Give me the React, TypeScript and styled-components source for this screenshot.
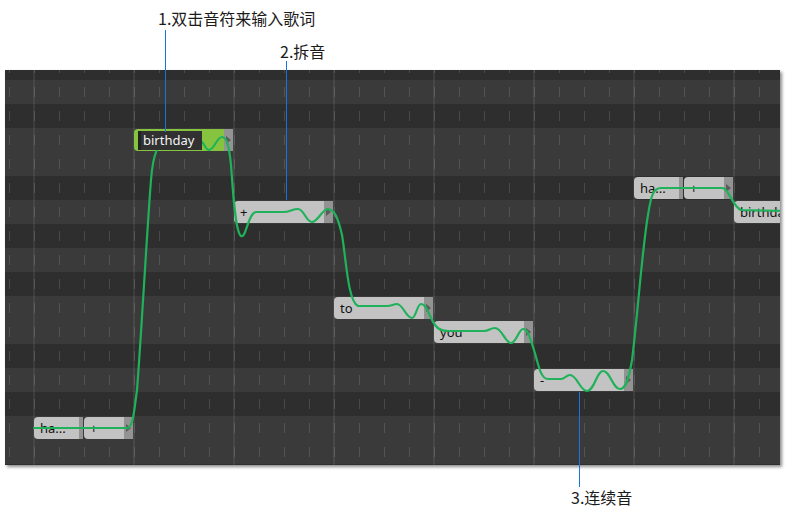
import React from 'react';
import styled, { createGlobalStyle } from 'styled-components';

const GlobalStyle = createGlobalStyle`
  html, body { margin: 0; padding: 0; background: #ffffff; }
  body { font-family: "Noto Sans CJK SC", "Noto Sans", sans-serif; }
  #root { width: 789px; height: 516px; }
`;

const Figure = styled.div`
  position: relative;
  box-sizing: border-box;
  width: 789px;
  height: 516px;
  padding: 70px 0 0 5px;
  overflow: hidden;
  background: #ffffff;
`;

const Editor = styled.div`
  position: relative;
  width: 775px;
  height: 395px;
  overflow: hidden;
  background: #2e2e2e;
  box-shadow: 2px 2px 3px rgba(0, 0, 0, 0.45);
`;

const Rows = styled.div`
  display: flex;
  flex-direction: column;
  margin-top: -14px;
`;

const KeyRow = styled.div<{ $black: boolean }>`
  flex: none;
  height: 24px;
  background-color: ${(p) => (p.$black ? '#2e2e2e' : '#3a3a3a')};
  background-image:
    repeating-linear-gradient(to right, transparent 0 28px, rgba(255, 255, 255, 0.07) 28px 30px, transparent 30px 100px),
    repeating-linear-gradient(to right, transparent 0 4px, rgba(255, 255, 255, 0.13) 4px 5px, transparent 5px 25px);
  background-size: 100% 100%, 100% 10px;
  background-position: 0 0, 0 7px;
  background-repeat: no-repeat;
`;

const NotesLayer = styled.div`
  position: absolute;
  inset: 0;
`;

const NoteBox = styled.div`
  position: absolute;
  display: flex;
  height: 22px;
`;

const NoteBody = styled.div<{ $selected?: boolean }>`
  flex: 1;
  display: flex;
  align-items: center;
  min-width: 0;
  padding-left: ${(p) => (p.$selected ? '4px' : '6px')};
  border-radius: 4px 0 0 4px;
  background: ${(p) => (p.$selected ? '#86c43f' : '#c3c3c3')};
  color: #111111;
  font-family: "Noto Sans", "Open Sans", sans-serif;
  font-size: 13px;
  line-height: 22px;
  white-space: nowrap;
`;

const NoteTail = styled.div<{ $linked?: boolean }>`
  flex: none;
  width: ${(p) => (p.$linked ? '4px' : '9px')};
  display: flex;
  align-items: center;
  padding-left: 2px;
  box-sizing: border-box;
  background: #939393;
`;

const TailArrow = styled.span`
  width: 0;
  height: 0;
  border-left: 5px solid #5c5c5c;
  border-top: 4px solid transparent;
  border-bottom: 4px solid transparent;
`;

const LyricInput = styled.div`
  position: relative;
  z-index: 3;
  height: 19px;
  width: 64px;
  box-sizing: border-box;
  padding-left: 2px;
  background: #313131;
  border-left: 3px solid #222222;
  color: #f4f4f4;
  font-size: 13px;
  line-height: 19px;
`;

const Curve = styled.svg`
  position: absolute;
  left: 0;
  top: 0;
  z-index: 2;
  pointer-events: none;
`;

const Callout = styled.div<{ $lineFirst?: boolean }>`
  position: absolute;
  z-index: 4;
  display: flex;
  flex-direction: ${(p) => (p.$lineFirst ? 'column-reverse' : 'column')};
  align-items: flex-start;
`;

const CalloutText = styled.div`
  color: #1b1b1b;
  font-family: "Noto Sans CJK SC", "Noto Sans", sans-serif;
  font-size: 16px;
  line-height: 16px;
  white-space: nowrap;
`;

const Leader = styled.div<{ $offset: number; $length: number; $gap: number; $lineFirst?: boolean }>`
  width: 1px;
  height: ${(p) => p.$length}px;
  margin-left: ${(p) => p.$offset}px;
  ${(p) => (p.$lineFirst ? `margin-bottom: ${p.$gap}px;` : `margin-top: ${p.$gap}px;`)}
  background: #1775dc;
`;

type NoteData = {
  lyric: string;
  start: number;
  len: number;
  key: number;
  linked?: boolean;
  selected?: boolean;
};

const notes: NoteData[] = [
  { lyric: 'ha...', start: 0, len: 2, key: 14, linked: true },
  { lyric: '+', start: 2, len: 2, key: 14 },
  { lyric: 'birthday', start: 4, len: 4, key: 2, selected: true },
  { lyric: '+', start: 8, len: 4, key: 5 },
  { lyric: 'to', start: 12, len: 4, key: 9 },
  { lyric: 'you', start: 16, len: 4, key: 10 },
  { lyric: '-', start: 20, len: 4, key: 12 },
  { lyric: 'ha...', start: 24, len: 2, key: 4, linked: true },
  { lyric: '+', start: 26, len: 2, key: 4 },
  { lyric: 'birthday', start: 28, len: 4, key: 5 },
];

// Keys from top (first row is partially hidden)
const keyNames = ['Eb', 'D', 'Db', 'C', 'B', 'Bb', 'A', 'Ab', 'G', 'Gb', 'F', 'E', 'Eb', 'D', 'Db', 'C', 'B', 'Bb'];
const isBlack = (n: string) => n.length > 1;

const STEP = 25;
const ORIGIN_X = 29;
const ROW_H = 24;
const ORIGIN_Y = 10;

const pitchPath = [
  'M 34 428 L 127 428',
  'C 133 428, 134 412, 137 390',
  'C 141 340, 147 230, 151 180',
  'C 153 155, 157 141, 170 141 L 200 141',
  'C 204 141, 205 150, 209 150',
  'C 214 150, 217 137, 222 137',
  'C 227 137, 229 146, 231 165',
  'C 233 190, 235 232, 241 236',
  'C 246 239, 248 213, 256 212 L 283 212',
  'C 290 212, 292 209, 298 209',
  'C 304 209, 306 222, 312 222',
  'C 318 222, 322 209, 328 209',
  'C 334 209, 338 217, 342 235',
  'C 346 258, 348 302, 358 306 L 387 306',
  'C 392 306, 393 304, 397 304',
  'C 403 304, 406 318, 412 318',
  'C 416 318, 417 304, 421 304',
  'C 426 304, 428 312, 432 320',
  'C 436 328, 440 331, 448 331 L 484 331',
  'C 489 331, 490 328, 495 328',
  'C 502 328, 505 343, 511 343',
  'C 516 343, 519 329, 523 329',
  'C 528 329, 530 338, 534 350',
  'C 538 362, 540 379, 548 379 L 561 379',
  'C 565 379, 566 375, 570 375',
  'C 577 375, 580 391, 587 391',
  'C 594 391, 597 371, 603 371',
  'C 610 371, 613 389, 620 389',
  'C 626 389, 629 378, 632 360',
  'C 637 322, 642 250, 648 215',
  'C 651 196, 653 188, 661 188 L 722 188',
  'C 729 188, 732 206, 741 210 L 782 211',
].join(' ');

const Note: React.FC<{ n: NoteData }> = ({ n }) => (
  <NoteBox
    style={{
      left: ORIGIN_X + n.start * STEP,
      top: ORIGIN_Y + n.key * ROW_H + 1,
      width: n.len * STEP - 1,
    }}
  >
    <NoteBody $selected={n.selected}>
      {n.selected ? <LyricInput>{n.lyric}</LyricInput> : n.lyric}
    </NoteBody>
    <NoteTail $linked={n.linked}>{!n.linked && <TailArrow />}</NoteTail>
  </NoteBox>
);

export default function App() {
  return (
    <>
      <GlobalStyle />
      <Figure>
        <Editor>
          <Rows>
            {keyNames.map((k, i) => (
              <KeyRow key={i} $black={isBlack(k)} />
            ))}
          </Rows>
          <NotesLayer>
            {notes.map((n, i) => (
              <Note key={i} n={n} />
            ))}
          </NotesLayer>
          <Curve width={775} height={395} viewBox="5 70 775 395">
            <path d={pitchPath} fill="none" stroke="#1fb25a" strokeWidth={2.2} strokeLinejoin="round" strokeLinecap="round" />
          </Curve>
        </Editor>

        <Callout style={{ left: 158, top: 10 }}>
          <CalloutText>1.双击音符来输入歌词</CalloutText>
          <Leader $offset={7} $gap={4} $length={102} />
        </Callout>
        <Callout style={{ left: 280, top: 43 }}>
          <CalloutText>2.拆音</CalloutText>
          <Leader $offset={6} $gap={2} $length={139} />
        </Callout>
        <Callout $lineFirst style={{ left: 571, top: 392 }}>
          <CalloutText>3.连续音</CalloutText>
          <Leader $lineFirst $offset={8} $gap={2} $length={95} />
        </Callout>
      </Figure>
    </>
  );
}
